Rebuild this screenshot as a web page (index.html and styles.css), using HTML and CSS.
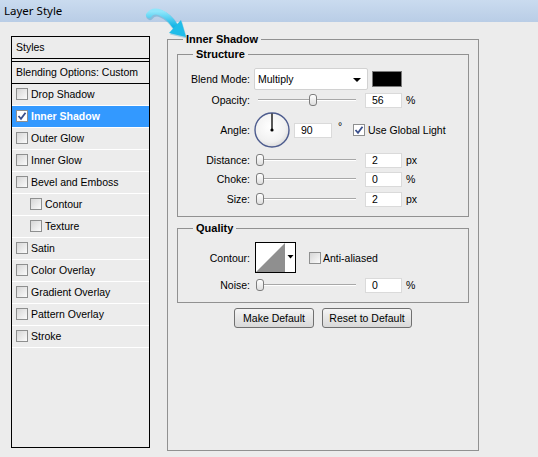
FILE: index.html
```html
<!DOCTYPE html>
<html lang="en">

<head>
    <meta charset="UTF-8">
    <meta name="viewport" content="width=device-width, initial-scale=1.0">
    <title>Layer Style</title>
    <link rel="stylesheet" href="styles.css">
</head>

<body>
    <div class="titlebar">Layer Style</div>

    <!-- Callout arrow drawn over the title bar -->
    <svg class="callout" width="538" height="60" viewBox="0 0 538 60">
        <defs>
            <linearGradient id="arrowFill" x1="0" y1="0" x2="0" y2="1">
                <stop offset="0" stop-color="#8fe6fb" />
                <stop offset="1" stop-color="#16b6e6" />
            </linearGradient>
        </defs>
        <path d="M149 15 C154 8, 166 12, 175 26" fill="none" stroke="#0f93c0" stroke-width="7" stroke-linecap="round" opacity="0.3" transform="translate(1,1.5)" />
        <polygon points="186,37 169,33 181,20" fill="#0f93c0" opacity="0.3" transform="translate(1,1.5)" />
        <path d="M149 15 C154 8, 166 12, 175 26" fill="none" stroke="url(#arrowFill)" stroke-width="6" stroke-linecap="round" />
        <polygon points="186,37 169,33 181,20" fill="#1fbde9" />
    </svg>

    <div class="dialog">
        <!-- Styles list -->
        <div class="styles-panel">
            <div class="panel-head">Styles</div>
            <div class="panel-gap"></div>
            <div class="panel-head">Blending Options: Custom</div>
            <ul class="effects">
                <li><span class="cb"></span>Drop Shadow</li>
                <li class="active">
                    <span class="cb checked">
                        <svg width="10" height="10" viewBox="0 0 10 10"><path d="M1.5 5 L4 7.8 L8.5 1.8" fill="none" stroke="#3a4f8c" stroke-width="1.8" /></svg>
                    </span>Inner Shadow
                </li>
                <li><span class="cb"></span>Outer Glow</li>
                <li><span class="cb"></span>Inner Glow</li>
                <li><span class="cb"></span>Bevel and Emboss</li>
                <li class="sub"><span class="cb"></span>Contour</li>
                <li class="sub"><span class="cb"></span>Texture</li>
                <li><span class="cb"></span>Satin</li>
                <li><span class="cb"></span>Color Overlay</li>
                <li><span class="cb"></span>Gradient Overlay</li>
                <li><span class="cb"></span>Pattern Overlay</li>
                <li><span class="cb"></span>Stroke</li>
            </ul>
        </div>

        <!-- Settings -->
        <fieldset class="group outer">
            <legend>Inner Shadow</legend>

            <fieldset class="group structure">
                <legend>Structure</legend>

                <div class="row blend">
                    <span class="lbl">Blend Mode:</span>
                    <div class="select">Multiply<span class="caret"></span></div>
                    <span class="swatch"></span>
                </div>

                <div class="row">
                    <span class="lbl">Opacity:</span>
                    <div class="slider"><span class="thumb" style="left:53px"></span></div>
                    <div class="field">56</div>
                    <span class="unit">%</span>
                </div>

                <div class="row angle">
                    <span class="lbl">Angle:</span>
                    <svg class="dial" width="36" height="36" viewBox="0 0 36 36">
                        <defs>
                            <radialGradient id="dialFill" cx="0.45" cy="0.4" r="0.6">
                                <stop offset="0" stop-color="#ffffff" />
                                <stop offset="0.75" stop-color="#f1f1f1" />
                                <stop offset="1" stop-color="#dcdcdc" />
                            </radialGradient>
                        </defs>
                        <circle cx="18" cy="18" r="17" fill="url(#dialFill)" stroke="#4d5c8e" stroke-width="1.4" />
                        <line x1="18" y1="18" x2="18" y2="1.5" stroke="#000" stroke-width="1.3" />
                        <circle cx="18" cy="18" r="1.6" fill="#000" />
                    </svg>
                    <div class="field wide">90</div>
                    <span class="deg">°</span>
                    <span class="cb checked">
                        <svg width="10" height="10" viewBox="0 0 10 10"><path d="M1.5 5 L4 7.8 L8.5 1.8" fill="none" stroke="#3a4f8c" stroke-width="1.8" /></svg>
                    </span>
                    <span class="cb-text">Use Global Light</span>
                </div>

                <div class="row distance">
                    <span class="lbl">Distance:</span>
                    <div class="slider"><span class="thumb" style="left:0"></span></div>
                    <div class="field">2</div>
                    <span class="unit">px</span>
                </div>

                <div class="row choke">
                    <span class="lbl">Choke:</span>
                    <div class="slider"><span class="thumb" style="left:0"></span></div>
                    <div class="field">0</div>
                    <span class="unit">%</span>
                </div>

                <div class="row size">
                    <span class="lbl">Size:</span>
                    <div class="slider"><span class="thumb" style="left:0"></span></div>
                    <div class="field">2</div>
                    <span class="unit">px</span>
                </div>
            </fieldset>

            <fieldset class="group quality">
                <legend>Quality</legend>

                <div class="row contour">
                    <span class="lbl">Contour:</span>
                    <svg class="contour-box" width="41" height="31" viewBox="0 0 41 31">
                        <rect x="0.5" y="0.5" width="40" height="30" fill="#fff" stroke="#000" />
                        <polygon points="1,30 30,1 30,30" fill="#8f8f8f" />
                        <polygon points="32.5,13 38.5,13 35.5,16.5" fill="#000" />
                    </svg>
                    <span class="cb"></span>
                    <span class="cb-text">Anti-aliased</span>
                </div>

                <div class="row noise">
                    <span class="lbl">Noise:</span>
                    <div class="slider"><span class="thumb" style="left:0"></span></div>
                    <div class="field">0</div>
                    <span class="unit">%</span>
                </div>
            </fieldset>

            <div class="button-row">
                <button class="btn">Make Default</button>
                <button class="btn reset">Reset to Default</button>
            </div>
        </fieldset>
    </div>
</body>

</html>
```

FILE: styles.css
```css
body {
    margin: 0;
    height: 457px;
    background-color: #ececec;
    font-family: "Liberation Sans", Arial, sans-serif;
    font-size: 10.5px;
    color: #000;
    position: relative;
    overflow: hidden;
}

.titlebar {
    height: 22px;
    line-height: 22px;
    padding-left: 4px;
    font-family: "Noto Sans", sans-serif;
    font-size: 11.5px;
    background: linear-gradient(#cadbef, #b9cde6);
}

.callout {
    position: absolute;
    left: 0;
    top: 0;
    pointer-events: none;
}

.dialog {
    display: flex;
    align-items: flex-start;
    gap: 17px;
    padding-left: 11px;
}

/* Left list */
.styles-panel {
    margin-top: 14px;
    width: 139px;
    height: 412px;
    box-sizing: border-box;
    border: 1px solid #000;
}

.panel-head {
    height: 21px;
    line-height: 20px;
    padding-left: 4px;
    border-bottom: 1px solid #000;
}

.panel-gap {
    height: 2px;
    border-bottom: 1px solid #000;
}

.effects {
    list-style: none;
    margin: 0;
    padding: 0;
}

.effects li {
    height: 21px;
    box-sizing: border-box;
    display: flex;
    align-items: center;
    padding-left: 4px;
    padding-bottom: 1px;
    border-bottom: 1px solid #fff;
    height: 22px;
}

.effects li.sub {
    padding-left: 18px;
}

.effects li.active {
    background-color: #3399ff;
    color: #fff;
    font-weight: bold;
}

.cb {
    width: 12px;
    height: 12px;
    box-sizing: border-box;
    border: 1px solid #8e8f8f;
    background: linear-gradient(135deg, #d6d6d6, #fbfbfb);
    margin-right: 3px;
    display: inline-flex;
    align-items: center;
    justify-content: center;
    flex-shrink: 0;
}

.cb.checked {
    background: #fff;
}

/* Fieldsets */
.group {
    margin: 0;
    padding: 0 9px;
    border: 1px solid #919191;
    min-width: 0;
}

.group legend {
    font-weight: bold;
    font-size: 11px;
    line-height: 13px;
    padding: 0 3px;
    margin-left: 6px;
}

.outer {
    margin-top: 11px;
    width: 312px;
    height: 418px;
    box-sizing: border-box;
    padding-top: 2px;
}

.structure {
    padding-bottom: 9px;
}

.quality {
    margin-top: 5px;
    padding-bottom: 9px;
}

.row {
    display: flex;
    align-items: center;
    height: 16px;
    margin-top: 4px;
}

.row.blend {
    height: 22px;
    margin-top: 7px;
}

.row.blend + .row {
    margin-top: 2px;
}

.row.angle {
    height: 36px;
}

.row.choke {
    margin-top: 3px;
}

.row.contour {
    height: 31px;
    margin-top: 7px;
}

.lbl {
    width: 63px;
    text-align: right;
    flex-shrink: 0;
}

.select {
    margin-left: 4px;
    width: 114px;
    height: 22px;
    box-sizing: border-box;
    border: 1px solid #d2d2d2;
    border-radius: 2px;
    background: #fff;
    padding-left: 3px;
    display: flex;
    align-items: center;
    position: relative;
}

.caret {
    position: absolute;
    right: 6px;
    top: 9px;
    border-left: 4px solid transparent;
    border-right: 4px solid transparent;
    border-top: 4px solid #000;
}

.swatch {
    margin-left: 4px;
    width: 30px;
    height: 16px;
    box-sizing: border-box;
    background: #000;
    border: 1px solid #7a7a7a;
}

.slider {
    margin-left: 6px;
    width: 102px;
    height: 16px;
    position: relative;
}

.slider::before {
    content: "";
    position: absolute;
    left: 2px;
    right: 2px;
    top: 7px;
    border-top: 1px solid #a8a8a8;
    border-bottom: 1px solid #fff;
}

.thumb {
    position: absolute;
    top: 2px;
    width: 8px;
    height: 12px;
    box-sizing: border-box;
    border: 1px solid #7d7d7d;
    border-radius: 3px;
    background: linear-gradient(#ffffff, #dedede);
}

.field {
    margin-left: 7px;
    width: 37px;
    height: 15px;
    box-sizing: border-box;
    background: #fff;
    border: 1px solid #dadada;
    padding-left: 6px;
    line-height: 13px;
}

.field.wide {
    margin-left: 4px;
    width: 38px;
}

.unit {
    margin-left: 4px;
}

.dial {
    margin-left: 4px;
}

.deg {
    margin-left: 6px;
    margin-top: -8px;
    width: 4px;
}

.angle .cb {
    margin-left: 11px;
}

.cb-text {
    margin-left: 0;
}

.contour-box {
    margin-left: 5px;
}

.contour .cb {
    margin-left: 13px;
    margin-right: 2px;
}

.button-row {
    display: flex;
    justify-content: center;
    gap: 8px;
    margin-top: 5px;
}

.btn {
    width: 80px;
    height: 20px;
    padding: 0;
    font-family: "Liberation Sans", Arial, sans-serif;
    font-size: 10.5px;
    color: #000;
    border: 1px solid #707070;
    border-radius: 3px;
    background: linear-gradient(#f5f5f5, #e6e6e6 50%, #d9d9d9);
}

.btn.reset {
    width: 90px;
}
```
